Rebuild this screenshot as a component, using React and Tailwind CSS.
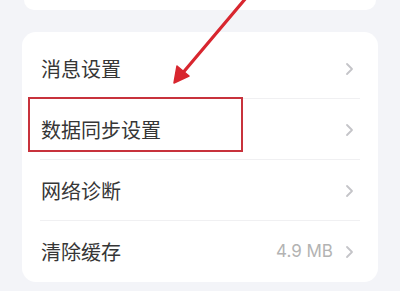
import React from "react";

const Chevron = () => (
  <svg width="9" height="14" viewBox="0 0 9 14" className="shrink-0">
    <polyline points="2,2 7,7 2,12" fill="none" stroke="#c4c4c8" strokeWidth="1.8" strokeLinecap="round" strokeLinejoin="round" />
  </svg>
);

const Row = ({ label, value, last }) => (
  <div className="relative h-[61px] flex items-center pl-[19px] pr-[24px]">
    <span className="text-[20px] text-[#363636] leading-none flex-1">{label}</span>
    {value && (
      <span className="text-[17px] text-[#b3b3b3] mr-[12px] leading-none" style={{ fontFamily: "Inter, 'Noto Sans', sans-serif" }}>{value}</span>
    )}
    <Chevron />
    {!last && <div className="absolute bottom-0 left-[18px] right-[18px] h-px bg-[#f0f0f2]" />}
  </div>
);

export default function App() {
  return (
    <div
      className="relative w-[400px] h-[291px] overflow-hidden bg-[#f3f4f8]"
      style={{ fontFamily: "'Noto Sans CJK SC', 'Noto Sans', sans-serif" }}
    >
      <div className="mx-[24px] h-[10px] rounded-b-[12px] bg-white" />
      <div className="mt-[22px] mx-[22px] rounded-[14px] bg-white pt-[6px]">
        <Row label="消息设置" />
        <Row label="数据同步设置" />
        <Row label="网络诊断" />
        <Row label="清除缓存" value="4.9 MB" last />
      </div>
      <div className="absolute left-[28px] top-[97px] w-[215px] h-[55px] border-2 border-[#c8323c]" />
      <svg className="absolute left-0 top-0" width="400" height="100" viewBox="0 0 400 100">
        <line x1="246" y1="-2" x2="181" y2="75" stroke="#d8262f" strokeWidth="3.2" strokeLinecap="round" />
        <polygon points="174,83 177,66 189,76" fill="#d8262f" stroke="#d8262f" strokeWidth="1.5" strokeLinejoin="round" />
      </svg>
    </div>
  );
}
